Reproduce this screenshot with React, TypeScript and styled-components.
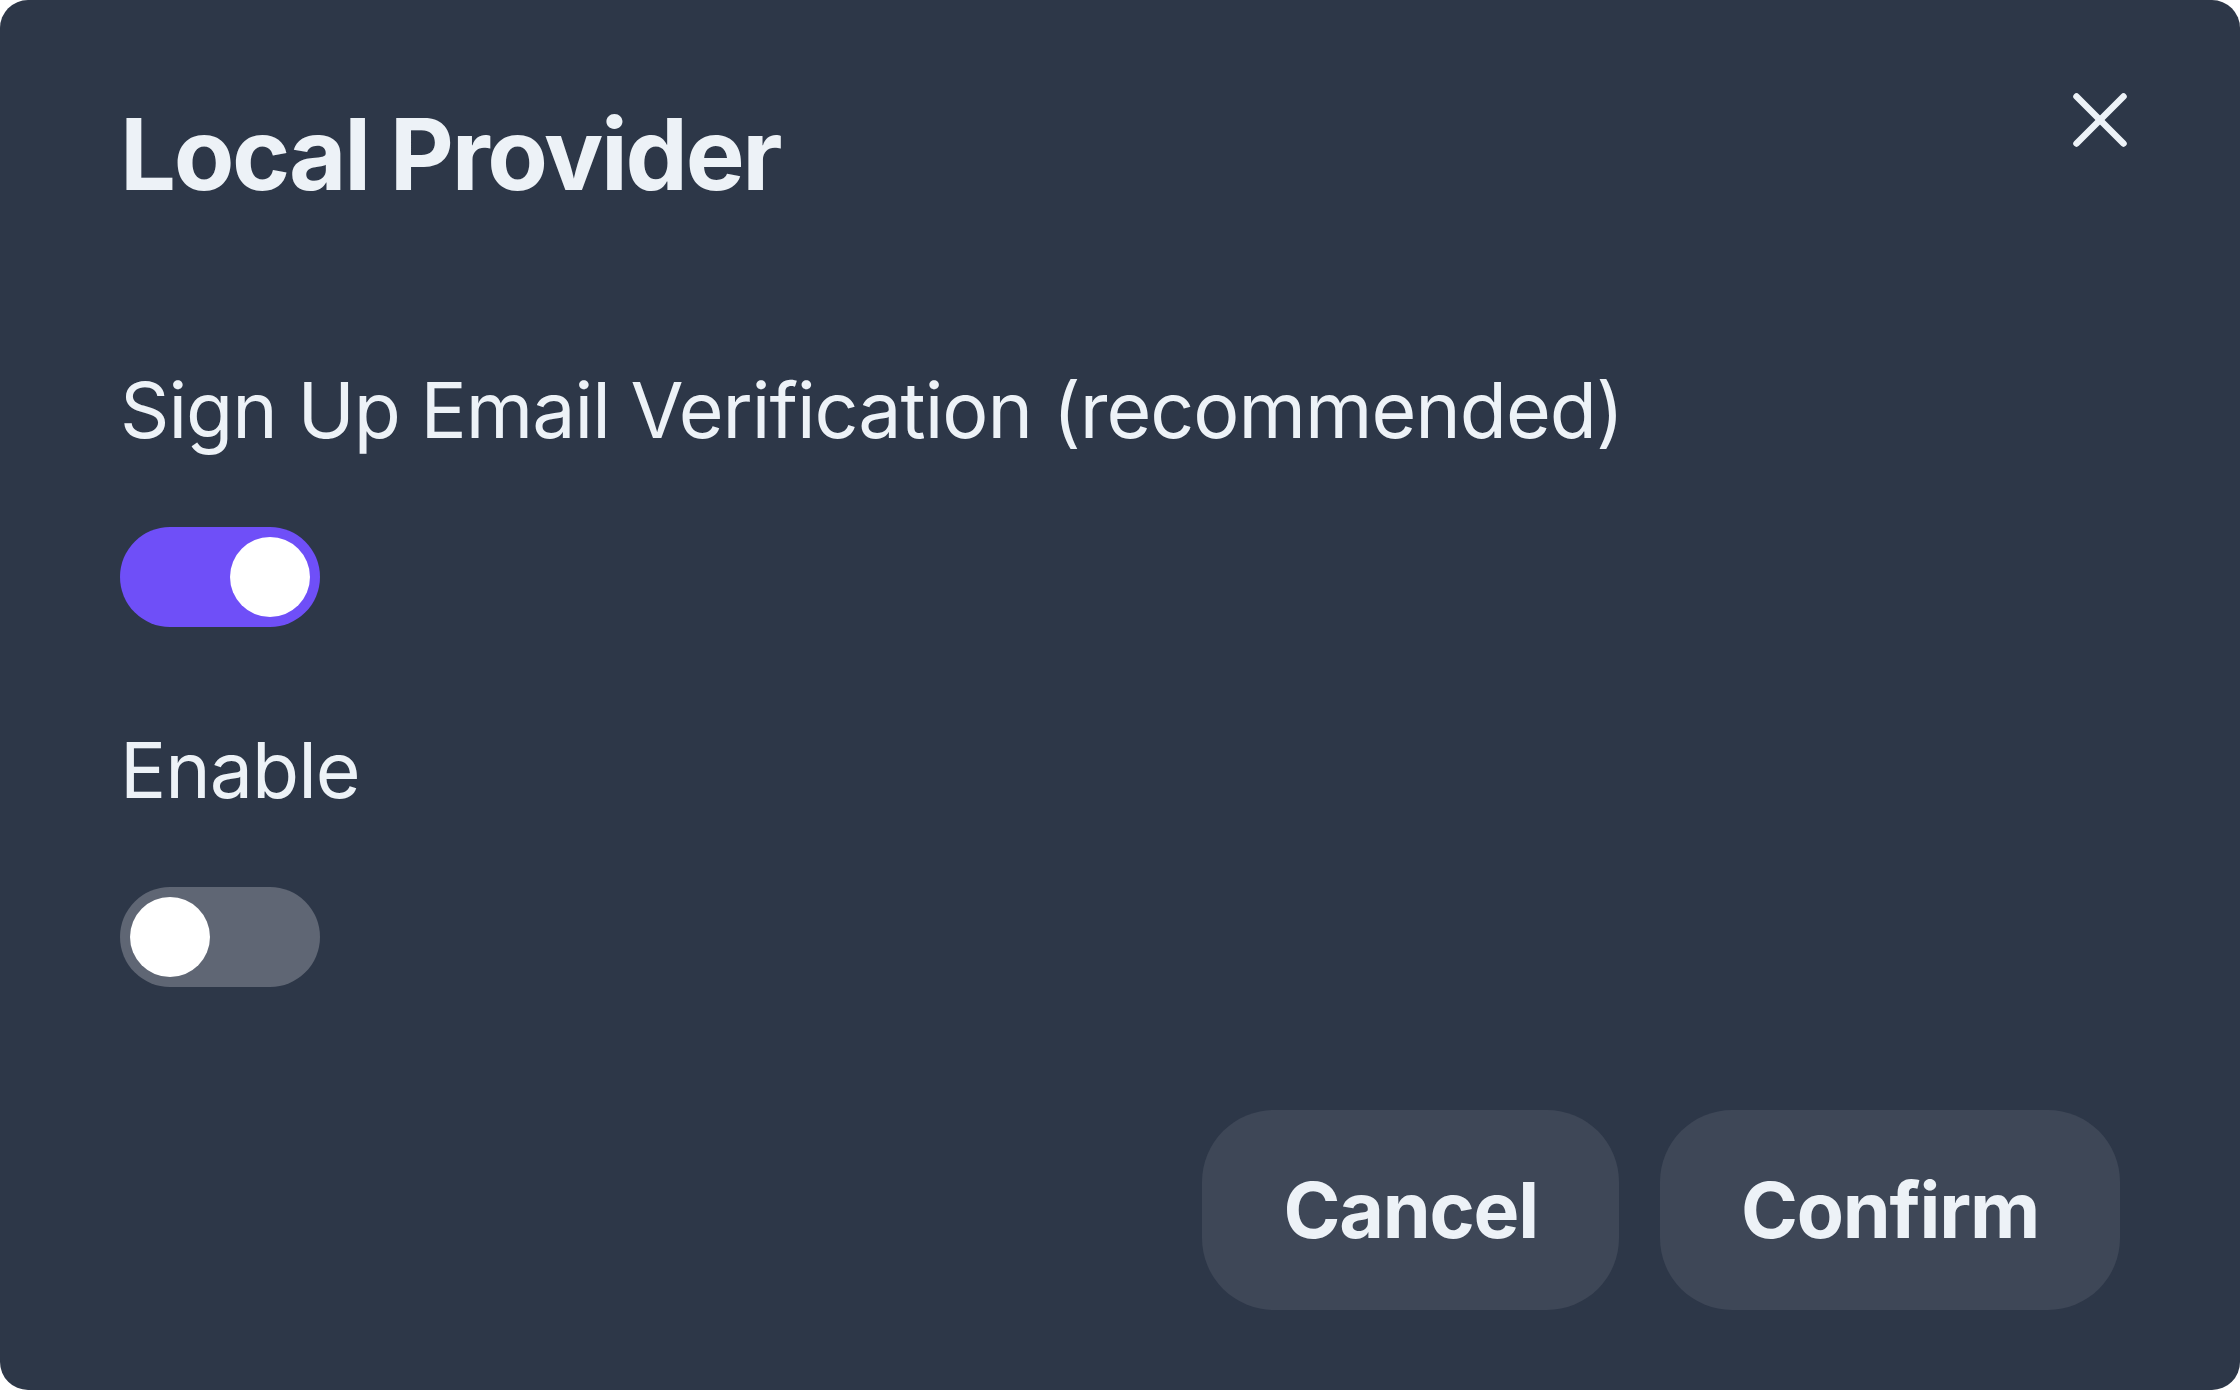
import React, { useState } from 'react';
import styled, { createGlobalStyle } from 'styled-components';

const GlobalStyle = createGlobalStyle`
  html, body {
    margin: 0;
    padding: 0;
    background: #ffffff;
  }
  * {
    box-sizing: border-box;
  }
`;

const Dialog = styled.div`
  display: flex;
  flex-direction: column;
  width: 2240px;
  height: 1390px;
  padding: 93px 120px 80px 120px;
  background-color: #2d3748;
  border-radius: 28px;
  color: #edf2f7;
  font-family: Inter, 'Liberation Sans', sans-serif;
  overflow: hidden;
`;

const Header = styled.div`
  display: flex;
  justify-content: space-between;
  align-items: flex-start;
`;

const Title = styled.h2`
  margin: 2px 0 0 0;
  font-size: 99px;
  line-height: 119px;
  font-weight: 700;
  letter-spacing: -2.3px;
`;

const CloseButton = styled.button`
  display: flex;
  align-items: center;
  justify-content: center;
  width: 54px;
  height: 54px;
  margin-right: -7px;
  padding: 0;
  border: none;
  background: transparent;
  color: #edf2f7;
  cursor: pointer;
`;

const Body = styled.div`
  display: flex;
  flex-direction: column;
  gap: 97px;
  margin-top: 150px;
`;

const Field = styled.div`
  display: flex;
  flex-direction: column;
  align-items: flex-start;
  gap: 71px;
`;

const Label = styled.div`
  font-size: 77px;
  line-height: 92px;
  font-weight: 400;
  letter-spacing: -1px;
`;

const Track = styled.button<{ $on: boolean }>`
  position: relative;
  width: 200px;
  height: 100px;
  padding: 0;
  border: none;
  border-radius: 50px;
  background-color: ${(p) => (p.$on ? '#6f4ff8' : '#5f6674')};
  cursor: pointer;
`;

const Knob = styled.span<{ $on: boolean }>`
  position: absolute;
  top: 10px;
  left: ${(p) => (p.$on ? '110px' : '10px')};
  width: 80px;
  height: 80px;
  border-radius: 50%;
  background-color: #ffffff;
`;

const Footer = styled.div`
  display: flex;
  justify-content: flex-end;
  gap: 41px;
  margin-top: auto;
`;

const ActionButton = styled.button`
  display: flex;
  align-items: center;
  justify-content: center;
  height: 200px;
  padding: 0 81px;
  border: none;
  border-radius: 72px;
  background-color: #3e4757;
  color: #edf2f7;
  font-family: Inter, 'Liberation Sans', sans-serif;
  font-size: 77px;
  line-height: 92px;
  font-weight: 700;
  letter-spacing: -1.2px;
  cursor: pointer;
`;

interface ToggleProps {
  on: boolean;
  onChange: () => void;
}

const Toggle: React.FC<ToggleProps> = ({ on, onChange }) => (
  <Track $on={on} onClick={onChange} aria-pressed={on}>
    <Knob $on={on} />
  </Track>
);

const App: React.FC = () => {
  const [verify, setVerify] = useState(true);
  const [enabled, setEnabled] = useState(false);

  return (
    <>
      <GlobalStyle />
      <Dialog>
        <Header>
          <Title>Local Provider</Title>
          <CloseButton aria-label='Close'>
            <svg width='54' height='54' viewBox='0 0 54 54' fill='none' stroke='currentColor' strokeWidth='6.5' strokeLinecap='round'>
              <path d='M3.5 3.5 L50.5 50.5' />
              <path d='M50.5 3.5 L3.5 50.5' />
            </svg>
          </CloseButton>
        </Header>
        <Body>
          <Field>
            <Label>Sign Up Email Verification (recommended)</Label>
            <Toggle on={verify} onChange={() => setVerify(!verify)} />
          </Field>
          <Field>
            <Label>Enable</Label>
            <Toggle on={enabled} onChange={() => setEnabled(!enabled)} />
          </Field>
        </Body>
        <Footer>
          <ActionButton>Cancel</ActionButton>
          <ActionButton>Confirm</ActionButton>
        </Footer>
      </Dialog>
    </>
  );
};

export default App;
